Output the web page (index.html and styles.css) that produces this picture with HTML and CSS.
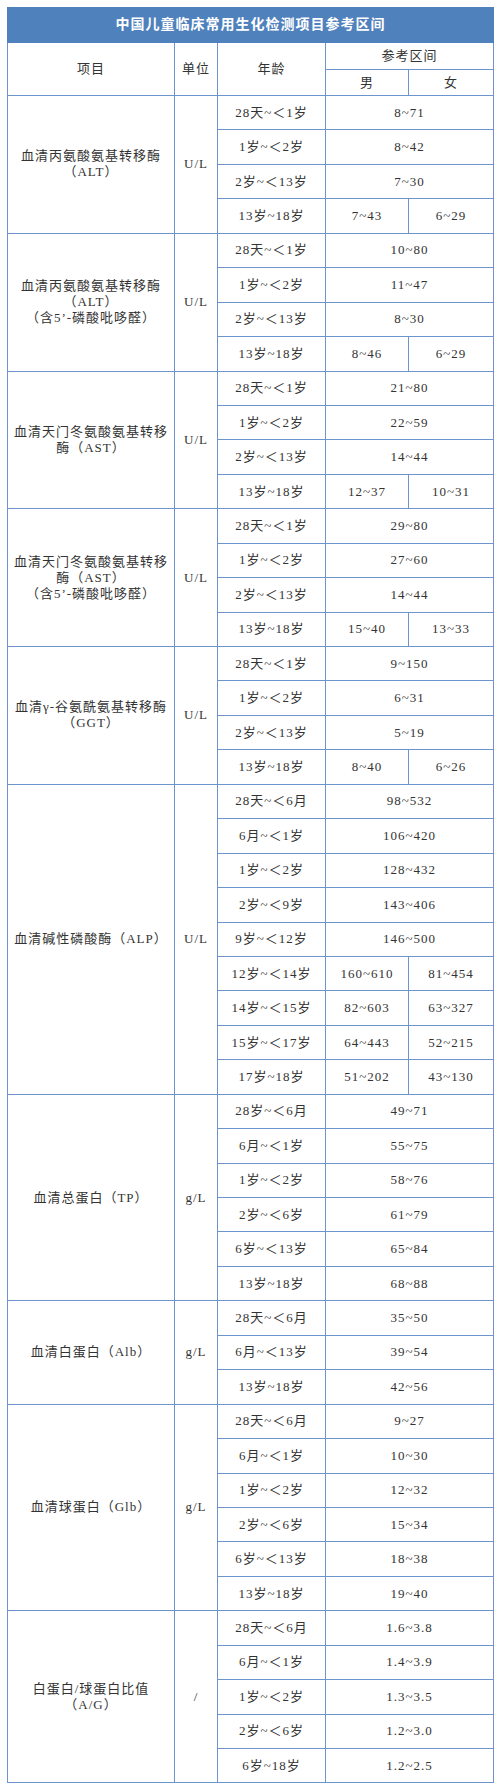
FILE: index.html
```html
<!DOCTYPE html>
<html lang="zh-CN">
<head>
<meta charset="utf-8">
<title>中国儿童临床常用生化检测项目参考区间</title>
<link rel="stylesheet" href="styles.css">
</head>
<body>
<table class="ref">
  <colgroup>
    <col class="c-item"><col class="c-unit"><col class="c-age"><col class="c-m"><col class="c-f">
  </colgroup>
  <thead>
    <tr class="title-row"><th colspan="5" class="title">中国儿童临床常用生化检测项目参考区间</th></tr>
    <tr class="h1"><th rowspan="2">项目</th><th rowspan="2">单位</th><th rowspan="2">年龄</th><th colspan="2">参考区间</th></tr>
    <tr class="h2"><th>男</th><th>女</th></tr>
  </thead>
  <tbody>
    <tr><td rowspan="4" class="item">血清丙氨酸氨基转移酶<br>（ALT）</td><td rowspan="4">U/L</td><td>28天~＜1岁</td><td colspan="2">8~71</td></tr>
    <tr><td>1岁~＜2岁</td><td colspan="2">8~42</td></tr>
    <tr><td>2岁~＜13岁</td><td colspan="2">7~30</td></tr>
    <tr><td>13岁~18岁</td><td>7~43</td><td>6~29</td></tr>

    <tr><td rowspan="4" class="item">血清丙氨酸氨基转移酶<br>（ALT）<br>（含5’-磷酸吡哆醛）</td><td rowspan="4">U/L</td><td>28天~＜1岁</td><td colspan="2">10~80</td></tr>
    <tr><td>1岁~＜2岁</td><td colspan="2">11~47</td></tr>
    <tr><td>2岁~＜13岁</td><td colspan="2">8~30</td></tr>
    <tr><td>13岁~18岁</td><td>8~46</td><td>6~29</td></tr>

    <tr><td rowspan="4" class="item">血清天门冬氨酸氨基转移<br>酶（AST）</td><td rowspan="4">U/L</td><td>28天~＜1岁</td><td colspan="2">21~80</td></tr>
    <tr><td>1岁~＜2岁</td><td colspan="2">22~59</td></tr>
    <tr><td>2岁~＜13岁</td><td colspan="2">14~44</td></tr>
    <tr><td>13岁~18岁</td><td>12~37</td><td>10~31</td></tr>

    <tr><td rowspan="4" class="item">血清天门冬氨酸氨基转移<br>酶（AST）<br>（含5’-磷酸吡哆醛）</td><td rowspan="4">U/L</td><td>28天~＜1岁</td><td colspan="2">29~80</td></tr>
    <tr><td>1岁~＜2岁</td><td colspan="2">27~60</td></tr>
    <tr><td>2岁~＜13岁</td><td colspan="2">14~44</td></tr>
    <tr><td>13岁~18岁</td><td>15~40</td><td>13~33</td></tr>

    <tr><td rowspan="4" class="item">血清γ-谷氨酰氨基转移酶<br>（GGT）</td><td rowspan="4">U/L</td><td>28天~＜1岁</td><td colspan="2">9~150</td></tr>
    <tr><td>1岁~＜2岁</td><td colspan="2">6~31</td></tr>
    <tr><td>2岁~＜13岁</td><td colspan="2">5~19</td></tr>
    <tr><td>13岁~18岁</td><td>8~40</td><td>6~26</td></tr>

    <tr><td rowspan="9" class="item">血清碱性磷酸酶（ALP）</td><td rowspan="9">U/L</td><td>28天~＜6月</td><td colspan="2">98~532</td></tr>
    <tr><td>6月~＜1岁</td><td colspan="2">106~420</td></tr>
    <tr><td>1岁~＜2岁</td><td colspan="2">128~432</td></tr>
    <tr><td>2岁~＜9岁</td><td colspan="2">143~406</td></tr>
    <tr><td>9岁~＜12岁</td><td colspan="2">146~500</td></tr>
    <tr><td>12岁~＜14岁</td><td>160~610</td><td>81~454</td></tr>
    <tr><td>14岁~＜15岁</td><td>82~603</td><td>63~327</td></tr>
    <tr><td>15岁~＜17岁</td><td>64~443</td><td>52~215</td></tr>
    <tr><td>17岁~18岁</td><td>51~202</td><td>43~130</td></tr>

    <tr><td rowspan="6" class="item">血清总蛋白（TP）</td><td rowspan="6">g/L</td><td>28岁~＜6月</td><td colspan="2">49~71</td></tr>
    <tr><td>6月~＜1岁</td><td colspan="2">55~75</td></tr>
    <tr><td>1岁~＜2岁</td><td colspan="2">58~76</td></tr>
    <tr><td>2岁~＜6岁</td><td colspan="2">61~79</td></tr>
    <tr><td>6岁~＜13岁</td><td colspan="2">65~84</td></tr>
    <tr><td>13岁~18岁</td><td colspan="2">68~88</td></tr>

    <tr><td rowspan="3" class="item">血清白蛋白（Alb）</td><td rowspan="3">g/L</td><td>28天~＜6月</td><td colspan="2">35~50</td></tr>
    <tr><td>6月~＜13岁</td><td colspan="2">39~54</td></tr>
    <tr><td>13岁~18岁</td><td colspan="2">42~56</td></tr>

    <tr><td rowspan="6" class="item">血清球蛋白（Glb）</td><td rowspan="6">g/L</td><td>28天~＜6月</td><td colspan="2">9~27</td></tr>
    <tr><td>6月~＜1岁</td><td colspan="2">10~30</td></tr>
    <tr><td>1岁~＜2岁</td><td colspan="2">12~32</td></tr>
    <tr><td>2岁~＜6岁</td><td colspan="2">15~34</td></tr>
    <tr><td>6岁~＜13岁</td><td colspan="2">18~38</td></tr>
    <tr><td>13岁~18岁</td><td colspan="2">19~40</td></tr>

    <tr><td rowspan="5" class="item">白蛋白/球蛋白比值<br>（A/G）</td><td rowspan="5">/</td><td>28天~＜6月</td><td colspan="2">1.6~3.8</td></tr>
    <tr><td>6月~＜1岁</td><td colspan="2">1.4~3.9</td></tr>
    <tr><td>1岁~＜2岁</td><td colspan="2">1.3~3.5</td></tr>
    <tr><td>2岁~＜6岁</td><td colspan="2">1.2~3.0</td></tr>
    <tr><td>6岁~18岁</td><td colspan="2">1.2~2.5</td></tr>
  </tbody>
</table>
</body>
</html>
```
FILE: styles.css
```css
html, body {
  margin: 0;
  padding: 0;
  background: #ffffff;
}
body {
  padding: 7px;
  font-family: "Liberation Serif", "Noto Sans CJK SC", serif;
  color: #333333;
}
.ref {
  border-collapse: collapse;
  table-layout: fixed;
  width: 486px;
  font-size: 13px;
  letter-spacing: 1px;
}
.c-item { width: 167px; }
.c-unit { width: 43px; }
.c-age { width: 108px; }
.c-m { width: 83px; }
.c-f { width: 85px; }

.ref th, .ref td {
  border: 1px solid #6e94cd;
  padding: 0 2px;
  text-align: center;
  vertical-align: middle;
  font-weight: normal;
  white-space: nowrap;
  line-height: 16px;
}
.title-row { height: 35px; }
.ref th.title {
  background: #4f81bd;
  border-color: #4f81bd;
  color: #ffffff;
  font-size: 14px;
  font-weight: bold;
  letter-spacing: 1px;
}
.h1 { height: 27px; }
.h2 { height: 26px; }
.ref tbody tr { height: 34.45px; }
.item { line-height: 16px; }
```
